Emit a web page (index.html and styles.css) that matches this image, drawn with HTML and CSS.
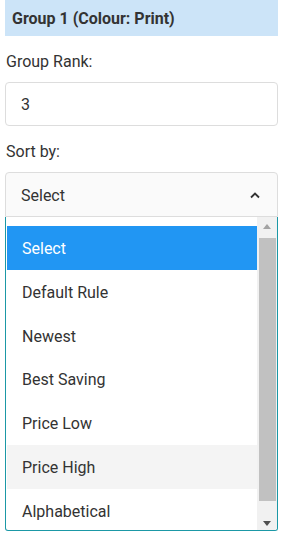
FILE: index.html
```html
<!DOCTYPE html>
<html lang="en">
<head>
    <meta charset="UTF-8">
    <meta name="viewport" content="width=device-width, initial-scale=1.0">
    <title>Group settings</title>
    <link rel="stylesheet" href="styles.css">
</head>
<body>

    <div class="panel">
        <div class="group--head">Group 1 (Colour: Print)</div>

        <label class="field--label">Group Rank:</label>
        <div class="field--input">3</div>

        <label class="field--label">Sort by:</label>
        <div class="picker is-open">
            <div class="picker--value">
                <span>Select</span>
                <svg class="picker--chevron" width="10" height="7" viewBox="0 0 10 7">
                    <polyline points="1,5.5 5,1.5 9,5.5" fill="none" stroke="#333" stroke-width="1.8"/>
                </svg>
            </div>
            <div class="picker--menu">
                <ul class="picker--list">
                    <li class="picker--item is-selected">Select</li>
                    <li class="picker--item">Default Rule</li>
                    <li class="picker--item">Newest</li>
                    <li class="picker--item">Best Saving</li>
                    <li class="picker--item">Price Low</li>
                    <li class="picker--item is-hover">Price High</li>
                    <li class="picker--item">Alphabetical</li>
                </ul>
                <div class="scrollbar">
                    <div class="scrollbar--btn up"></div>
                    <div class="scrollbar--track">
                        <div class="scrollbar--thumb"></div>
                    </div>
                    <div class="scrollbar--btn down"></div>
                </div>
            </div>
        </div>
    </div>

</body>
</html>
```

FILE: styles.css
```css
html, body {
    height: 100%;
    overflow: hidden;
}
body {
    margin: 0;
    font-family: Roboto, 'Liberation Sans', sans-serif;
    font-size: 16px;
    color: #333333;
    background-color: #ffffff;
}

.panel {
    width: 273px;
    padding-left: 5px;
}

.group--head {
    height: 36px;
    line-height: 37px;
    padding-left: 7px;
    background-color: #cce4f8;
    font-size: 16px;
    font-weight: 700;
    color: #333333;
}

.field--label {
    display: block;
    margin: 16px 0 10px 1px;
    line-height: 20px;
}

.field--input {
    height: 42px;
    line-height: 44px;
    padding-left: 15px;
    border: 1px solid #dddddd;
    border-radius: 4px;
}

.picker {
    position: relative;
}

.picker--value {
    display: flex;
    align-items: center;
    justify-content: space-between;
    height: 41px;
    padding: 2px 17px 0 15px;
    border: 1px solid #dddddd;
    border-radius: 4px 4px 0 0;
    background-color: #fafafa;
}

.picker--chevron {
    display: block;
}

.picker--menu {
    position: absolute;
    top: 45px;
    left: 0;
    right: 0;
    height: 313px;
    display: flex;
    border: 1px solid #1b98a6;
    border-top: none;
    border-radius: 0 0 3px 3px;
    background-color: #ffffff;
    overflow: hidden;
}

.picker--list {
    flex: 1;
    list-style: none;
    margin: 0;
    padding: 9px 0 0 1px;
}

.picker--item {
    height: 43.8px;
    line-height: 46px;
    padding-left: 15px;
}
.picker--item.is-selected {
    background-color: #2196f3;
    color: #ffffff;
}
.picker--item.is-hover {
    background-color: #f4f4f4;
}

.scrollbar {
    width: 20px;
    display: flex;
    flex-direction: column;
    background-color: #f1f1f1;
}

.scrollbar--btn {
    height: 20px;
    display: flex;
    align-items: center;
    justify-content: center;
}
.scrollbar--btn.up::before {
    content: '';
    border: 4.5px solid transparent;
    border-top: none;
    border-bottom: 5px solid #a3a3a3;
    margin-top: -2px;
}
.scrollbar--btn.down::before {
    content: '';
    border: 4.5px solid transparent;
    border-bottom: none;
    border-top: 5px solid #505050;
    margin-top: 6px;
}

.scrollbar--track {
    flex: 1;
    padding: 1px 1px 0 2px;
}

.scrollbar--thumb {
    height: 263px;
    background-color: #c1c1c1;
}
```
